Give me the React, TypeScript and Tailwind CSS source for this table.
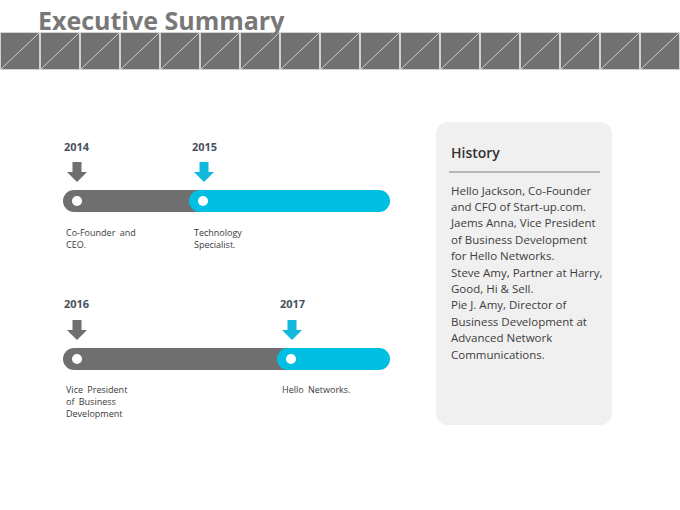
import React from "react";

const font = { fontFamily: '"Open Sans", "Noto Sans", sans-serif' };

const history = [
  "Hello Jackson, Co-Founder",
  "and CFO of Start-up.com.",
  "Jaems Anna, Vice President",
  "of Business Development",
  "for Hello Networks.",
  "Steve Amy, Partner at Harry,",
  "Good, Hi & Sell.",
  "Pie J. Amy, Director of",
  "Business Development at",
  "Advanced Network",
  "Communications.",
];

function Arrow({ color }: { color: string }) {
  return (
    <svg width="20" height="20" viewBox="0 0 20 20" className="block">
      <path d="M5.5 0h9v10H20l-10 10L0 10h5.5z" fill={color} />
    </svg>
  );
}

function Dot() {
  return <div className="h-[10px] w-[10px] rounded-full bg-white" />;
}

function Year({ children }: { children: React.ReactNode }) {
  return (
    <div className="ml-[1px] text-[11px] font-bold leading-[14px] text-[#45505e]">
      {children}
    </div>
  );
}

function Label({ lines }: { lines: string[] }) {
  return (
    <div className="ml-[3px] text-[9px] leading-[12px] text-[#3a3a3a] [word-spacing:2px]">
      {lines.map((l) => (
        <div key={l} className="whitespace-nowrap">
          {l}
        </div>
      ))}
    </div>
  );
}

export default function App() {
  return (
    <div className="h-[510px] w-[680px] overflow-hidden bg-white" style={font}>
      {/* Header */}
      <div className="relative z-10 h-[32px] pl-[38px] pt-[4px]">
        <h1 className="whitespace-nowrap text-[25px] font-bold leading-[32px] text-[#787878]">
          Executive Summary
        </h1>
      </div>
      <div className="flex h-[38px]">
        {Array.from({ length: 17 }).map((_, i) => (
          <div
            key={i}
            className="h-full w-[40px] shrink-0 border border-[#d2d2d2] bg-[#717171]"
          >
            <svg className="block h-full w-full" viewBox="0 0 38 36" preserveAspectRatio="none">
              <line
                x1="0"
                y1="36"
                x2="38"
                y2="0"
                stroke="#d0d0d0"
                strokeWidth="1"
                vectorEffect="non-scaling-stroke"
              />
            </svg>
          </div>
        ))}
      </div>

      {/* Body */}
      <div className="flex pl-[63px]">
        <div className="w-[327px] pt-[70px]">
          {/* 2014 - 2015 */}
          <div className="grid grid-cols-[128px_1fr]">
            <Year>2014</Year>
            <Year>2015</Year>
            <div className="ml-[4px] mt-[8px]">
              <Arrow color="#6f6f6f" />
            </div>
            <div className="ml-[3px] mt-[8px]">
              <Arrow color="#12b9dc" />
            </div>
          </div>
          <div className="mt-[8px] flex h-[22px]">
            <div className="flex w-[140px] shrink-0 items-center rounded-l-full bg-[#6f6f6f] pl-[9px]">
              <Dot />
            </div>
            <div className="-ml-[14px] flex flex-1 items-center rounded-full bg-[#00bfe2] pl-[9px]">
              <Dot />
            </div>
          </div>
          <div className="mt-[15px] grid grid-cols-[128px_1fr]">
            <Label lines={["Co-Founder and", "CEO."]} />
            <Label lines={["Technology", "Specialist."]} />
          </div>

          {/* 2016 - 2017 */}
          <div className="mt-[46px] grid grid-cols-[216px_1fr]">
            <Year>2016</Year>
            <Year>2017</Year>
            <div className="ml-[4px] mt-[9px]">
              <Arrow color="#6f6f6f" />
            </div>
            <div className="ml-[3px] mt-[9px]">
              <Arrow color="#12b9dc" />
            </div>
          </div>
          <div className="mt-[8px] flex h-[22px]">
            <div className="flex w-[228px] shrink-0 items-center rounded-l-full bg-[#6f6f6f] pl-[9px]">
              <Dot />
            </div>
            <div className="-ml-[14px] flex flex-1 items-center rounded-full bg-[#00bfe2] pl-[9px]">
              <Dot />
            </div>
          </div>
          <div className="mt-[14px] grid grid-cols-[216px_1fr]">
            <Label lines={["Vice President", "of Business", "Development"]} />
            <Label lines={["Hello Networks."]} />
          </div>
        </div>

        {/* History panel */}
        <div className="ml-[46px] mt-[52px] h-[303px] w-[176px] rounded-[12px] bg-[#f0f0f0] pt-[22px]">
          <div className="pl-[15px] text-[14px] font-semibold leading-[18px] text-[#333333]">
            History
          </div>
          <div className="ml-[13px] mr-[12px] mt-[9px] h-[1.5px] bg-[#b8b8b8]" />
          <div className="mt-[10px] pl-[15px] text-[11.5px] leading-[16.4px] text-[#3c3c3c]">
            {history.map((l) => (
              <div key={l} className="whitespace-nowrap">
                {l}
              </div>
            ))}
          </div>
        </div>
      </div>
    </div>
  );
}
